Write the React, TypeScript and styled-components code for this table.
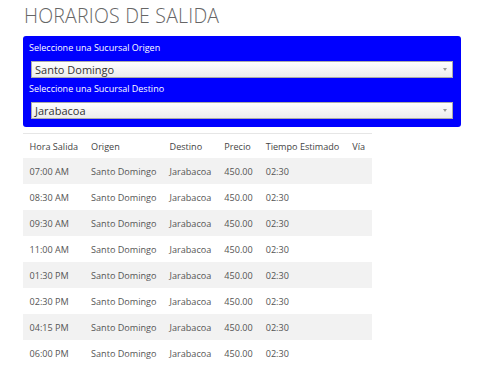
import { createGlobalStyle } from "styled-components";
import styled from "styled-components";

const GlobalStyle = createGlobalStyle`
  html, body {
    margin: 0;
    padding: 0;
    background: #fff;
  }

  body {
    font-family: "Open Sans", "Liberation Sans", sans-serif;
  }
`;

const Page = styled.main`
  padding: 4px 17px 0 23px;
`;

const Title = styled.h1`
  margin: 0 0 8px 1px;
  font-size: 19.5px;
  font-weight: 300;
  line-height: 24px;
  letter-spacing: 0.2px;
  color: #666;
`;

const Filters = styled.section`
  display: flex;
  flex-direction: column;
  padding: 5px 8px 4px 6px;
  background: #0000ff;
  border-radius: 3px;
`;

const FilterLabel = styled.label`
  display: block;
  font-size: 9px;
  line-height: 13px;
  color: #fff;
  margin: 0 0 7px;
`;

const SelectBox = styled.div`
  box-sizing: border-box;
  display: flex;
  align-items: center;
  justify-content: space-between;
  height: 17px;
  margin: 0 0 4px 2px;
  padding: 0 5px 0 3px;
  background: linear-gradient(#fff, #ececec);
  border: 1px solid #aaa;
  font-size: 11px;
  color: #333;
`;

const Caret = styled.span`
  width: 0;
  height: 0;
  border-left: 2px solid transparent;
  border-right: 2px solid transparent;
  border-top: 3px solid #999;
`;

const Table = styled.table`
  margin-top: 6px;
  border-collapse: collapse;
  border-top: 1px solid #e6e6e6;
  font-size: 9.1px;
  color: #555;
`;

const HeadCell = styled.th`
  height: 24px;
  padding: 0 6.5px;
  text-align: left;
  font-weight: 400;
  color: #444;
  white-space: nowrap;
`;

const Row = styled.tr<{ $striped: boolean }>`
  background: ${(p) => (p.$striped ? "#f2f2f2" : "transparent")};
`;

const Cell = styled.td`
  height: 26px;
  padding: 0 6.5px;
  white-space: nowrap;
`;

const salidas = [
  "07:00 AM",
  "08:30 AM",
  "09:30 AM",
  "11:00 AM",
  "01:30 PM",
  "02:30 PM",
  "04:15 PM",
  "06:00 PM",
];

const columnas = ["Hora Salida", "Origen", "Destino", "Precio", "Tiempo Estimado", "Vía"];

export default function App() {
  return (
    <>
      <GlobalStyle />
      <Page>
        <Title>HORARIOS DE SALIDA</Title>

        <Filters>
          <FilterLabel>Seleccione una Sucursal Origen</FilterLabel>
          <SelectBox>
            Santo Domingo
            <Caret />
          </SelectBox>
          <FilterLabel>Seleccione una Sucursal Destino</FilterLabel>
          <SelectBox>
            Jarabacoa
            <Caret />
          </SelectBox>
        </Filters>

        <Table>
          <thead>
            <tr>
              {columnas.map((c) => (
                <HeadCell key={c}>{c}</HeadCell>
              ))}
            </tr>
          </thead>
          <tbody>
            {salidas.map((hora, i) => (
              <Row key={hora} $striped={i % 2 === 0}>
                <Cell>{hora}</Cell>
                <Cell>Santo Domingo</Cell>
                <Cell>Jarabacoa</Cell>
                <Cell>450.00</Cell>
                <Cell>02:30</Cell>
                <Cell></Cell>
              </Row>
            ))}
          </tbody>
        </Table>
      </Page>
    </>
  );
}
